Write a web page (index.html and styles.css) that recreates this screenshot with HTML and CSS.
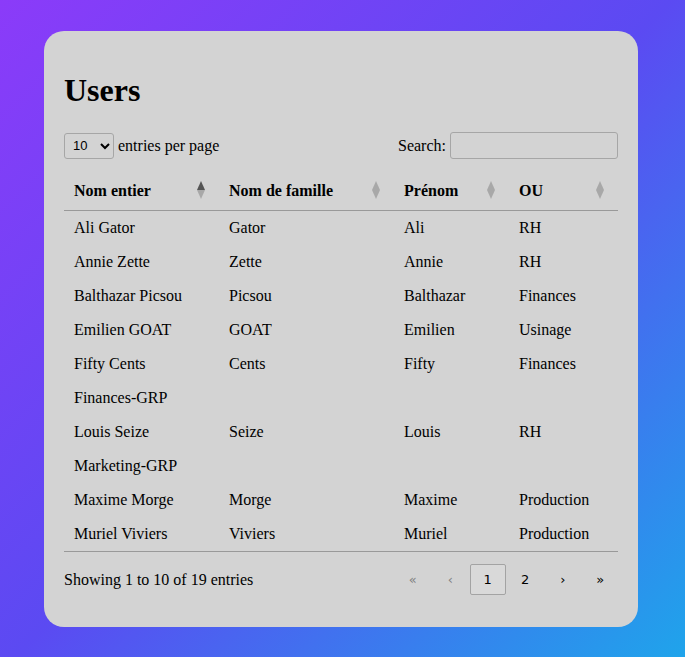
FILE: index.html
```html
<!DOCTYPE html>
<html lang="fr">
<head>
<meta charset="utf-8">
<title>Users</title>
<link rel="stylesheet" href="styles.css">
</head>
<body>
<main class="card">
  <h1 class="title">Users</h1>
  <div class="dt-top">
    <label class="dt-dropdown">
      <select class="dt-selector">
        <option>10</option>
        <option>25</option>
        <option>50</option>
      </select>
      <span>entries per page</span>
    </label>
    <label class="dt-search">
      <span>Search:</span>
      <input class="dt-input" type="search">
    </label>
  </div>
  <div class="dt-container">
    <table class="dt-table">
      <thead>
        <tr>
          <th class="c1 asc"><span class="sorter">Nom entier</span></th>
          <th class="c2"><span class="sorter">Nom de famille</span></th>
          <th class="c3"><span class="sorter">Prénom</span></th>
          <th class="c4"><span class="sorter">OU</span></th>
        </tr>
      </thead>
      <tbody>
        <tr><td>Ali Gator</td><td>Gator</td><td>Ali</td><td>RH</td></tr>
        <tr><td>Annie Zette</td><td>Zette</td><td>Annie</td><td>RH</td></tr>
        <tr><td>Balthazar Picsou</td><td>Picsou</td><td>Balthazar</td><td>Finances</td></tr>
        <tr><td>Emilien GOAT</td><td>GOAT</td><td>Emilien</td><td>Usinage</td></tr>
        <tr><td>Fifty Cents</td><td>Cents</td><td>Fifty</td><td>Finances</td></tr>
        <tr><td>Finances-GRP</td><td></td><td></td><td></td></tr>
        <tr><td>Louis Seize</td><td>Seize</td><td>Louis</td><td>RH</td></tr>
        <tr><td>Marketing-GRP</td><td></td><td></td><td></td></tr>
        <tr><td>Maxime Morge</td><td>Morge</td><td>Maxime</td><td>Production</td></tr>
        <tr><td>Muriel Viviers</td><td>Viviers</td><td>Muriel</td><td>Production</td></tr>
      </tbody>
    </table>
  </div>
  <div class="dt-bottom">
    <div class="dt-info">Showing 1 to 10 of 19 entries</div>
    <nav class="dt-pagination">
      <button class="pg disabled">«</button>
      <button class="pg disabled">‹</button>
      <button class="pg active">1</button>
      <button class="pg">2</button>
      <button class="pg">›</button>
      <button class="pg">»</button>
    </nav>
  </div>
</main>
</body>
</html>
```
FILE: styles.css
```css
html, body {
  margin: 0;
  padding: 0;
}
body {
  min-height: 657px;
  box-sizing: border-box;
  padding: 31px 0 0 44px;
  background: linear-gradient(135deg, #8b3bf9 0%, #5b4af2 50%, #1fa4eb 100%);
  font-family: "Liberation Serif", "Times New Roman", serif;
  font-size: 16px;
  color: #000;
}
.card {
  width: 554px;
  padding: 20px;
  background: #d3d3d3;
  border-radius: 20px;
}
.title {
  margin: 21px 0 22px;
  font-size: 32px;
  line-height: 37px;
  font-weight: bold;
}
.dt-top {
  display: flex;
  justify-content: space-between;
  align-items: center;
  height: 29px;
  margin-bottom: 14px;
}
.dt-dropdown, .dt-search {
  display: flex;
  align-items: center;
  gap: 4px;
}
.dt-selector {
  width: 50px;
  height: 26px;
  padding: 0 0 0 4px;
  font-family: "Liberation Sans", Arial, sans-serif;
  font-size: 13px;
  background-color: #d3d3d3;
  border: 1px solid #a6a6a6;
  border-radius: 3px;
  color: #000;
}
.dt-input {
  width: 168px;
  height: 27px;
  box-sizing: border-box;
  padding: 4px 8px;
  background: #d3d3d3;
  border: 1px solid #a6a6a6;
  border-radius: 3px;
}
.dt-container {
  border-bottom: 1px solid #999;
}
.dt-table {
  width: 100%;
  border-spacing: 0;
  border-collapse: separate;
  table-layout: fixed;
}
.dt-table th {
  text-align: left;
  vertical-align: bottom;
  padding: 8px 10px 10px;
  line-height: 18px;
  border-bottom: 1px solid #999;
  font-weight: bold;
}
.dt-table td {
  padding: 8px 10px;
  line-height: 18px;
  vertical-align: top;
  white-space: nowrap;
}
.c1 { width: 135px; }
.c2 { width: 155px; }
.c3 { width: 95px; }
.c4 { width: auto; }
.sorter {
  display: block;
  position: relative;
  height: 18px;
}
.sorter::before, .sorter::after {
  content: "";
  position: absolute;
  right: 4px;
  width: 0;
  height: 0;
  border-left: 4px solid transparent;
  border-right: 4px solid transparent;
  opacity: 0.2;
}
.sorter::after {
  top: -1px;
  border-bottom: 9px solid #000;
}
.sorter::before {
  bottom: 1px;
  border-top: 9px solid #000;
}
.asc .sorter::after {
  opacity: 0.6;
}
.dt-bottom {
  display: flex;
  justify-content: space-between;
  align-items: center;
  padding: 12px 0;
}
.dt-pagination {
  display: flex;
  gap: 2px;
}
.pg {
  width: 35.5px;
  height: 31px;
  padding: 0;
  border: 1px solid transparent;
  border-radius: 2px;
  background: transparent;
  font-family: "DejaVu Sans", sans-serif;
  font-size: 13px;
  color: #000;
  display: flex;
  align-items: center;
  justify-content: center;
}
.pg.disabled {
  opacity: 0.4;
}
.pg.active {
  background: #d9d9d9;
  border-color: #a3a3a3;
}
```
